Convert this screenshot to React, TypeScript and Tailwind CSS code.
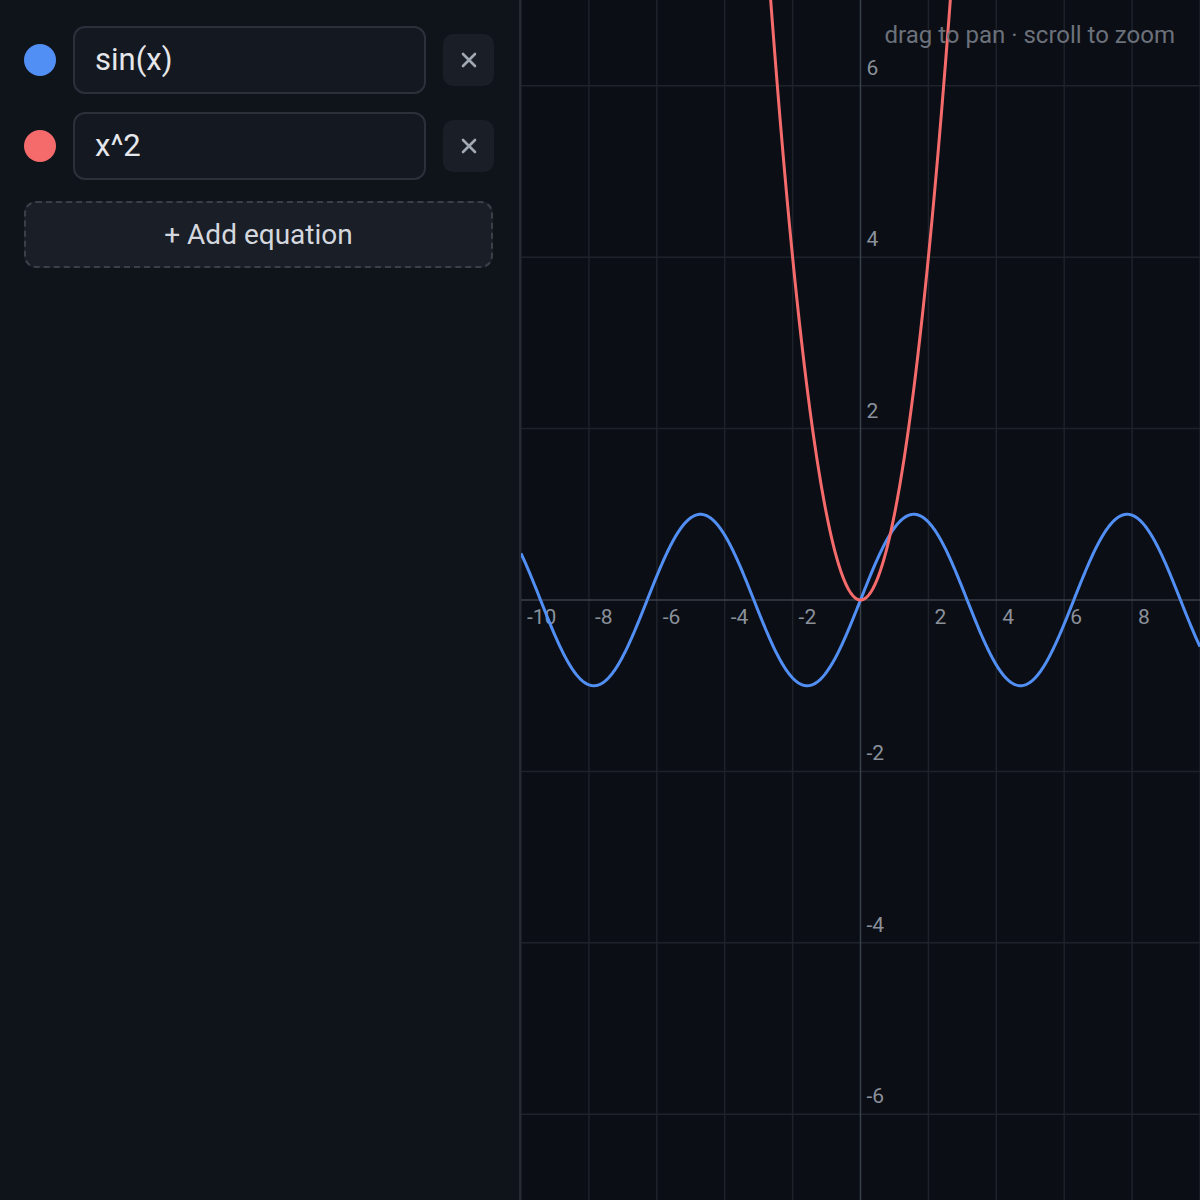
interface Equation {
    expr: string,
    color: string,
    fn: (x: number) => number
}

const equations: Equation[] = [
    { expr: "sin(x)", color: "#528ff5", fn: (x) => Math.sin(x) },
    { expr: "x^2", color: "#f56b6b", fn: (x) => x * x },
];

// viewport: x in [-10, 10], y in [-7, 7]
const W = 679;
const H = 1200;
const X_MIN = -10;
const X_MAX = 10;
const Y_MIN = -7;
const Y_MAX = 7;

const sx = (x: number) => ((x - X_MIN) / (X_MAX - X_MIN)) * W;
const sy = (y: number) => H - ((y - Y_MIN) / (Y_MAX - Y_MIN)) * H;

function curvePath(fn: (x: number) => number) {
    const pts: string[] = [];
    const steps = 800;
    for (let i = 0; i <= steps; i++) {
        const x = X_MIN + ((X_MAX - X_MIN) * i) / steps;
        const y = fn(x);
        const py = Math.max(-200, Math.min(H + 200, sy(y)));
        pts.push(`${i === 0 ? "M" : "L"}${sx(x).toFixed(2)},${py.toFixed(2)}`);
    }
    return pts.join(" ");
}

const xTicks = [-10, -8, -6, -4, -2, 2, 4, 6, 8];
const yTicks = [6, 4, 2, -2, -4, -6];

function Graph() {
    const ox = sx(0);
    const oy = sy(0);
    return (
        <svg width={W} height={H} className="block" style={{ fontFamily: "Roboto, sans-serif" }}>
            {xTicks.concat([10]).map((t) => (
                <line key={"gx" + t} x1={sx(t)} x2={sx(t)} y1={0} y2={H} stroke="#1e232b" strokeWidth={1.5} />
            ))}
            {yTicks.map((t) => (
                <line key={"gy" + t} x1={0} x2={W} y1={sy(t)} y2={sy(t)} stroke="#1e232b" strokeWidth={1.5} />
            ))}
            <line x1={ox} x2={ox} y1={0} y2={H} stroke="#3a404a" strokeWidth={1.5} />
            <line x1={0} x2={W} y1={oy} y2={oy} stroke="#3a404a" strokeWidth={1.5} />
            {xTicks.map((t) => (
                <text key={"lx" + t} x={sx(t) + 6} y={oy + 24} fontSize={21} fill="#8a919b">{t}</text>
            ))}
            {yTicks.map((t) => (
                <text key={"ly" + t} x={ox + 6} y={sy(t) - 11} fontSize={21} fill="#8a919b">{t}</text>
            ))}
            {equations.map((eq) => (
                <path key={eq.expr} d={curvePath(eq.fn)} fill="none" stroke={eq.color} strokeWidth={3} strokeLinejoin="round" />
            ))}
        </svg>
    );
}

function CloseIcon() {
    return (
        <svg width="16" height="16" viewBox="0 0 16 16" fill="none" stroke="currentColor" strokeWidth={2.6} strokeLinecap="round">
            <path d="M2 2 L14 14 M14 2 L2 14" />
        </svg>
    );
}

export default function App() {
    return (
        <div className="flex w-[1200px] h-[1200px] overflow-hidden bg-[#0b0e14] font-['Roboto',sans-serif]">
            <aside className="flex flex-col w-[521px] shrink-0 bg-[#0f131a] border-r-2 border-[#262b33] pl-6 pr-[25px] pt-[26px] gap-[18px]">
                {equations.map((eq) => (
                    <div key={eq.expr} className="flex flex-row items-center h-[68px]">
                        <span className="w-8 h-8 rounded-full shrink-0" style={{ backgroundColor: eq.color }} />
                        <div className="ml-[17px] w-[353px] h-[68px] flex items-center px-5 rounded-xl border-2 border-[#2b313b] bg-[#141820] text-[31px] text-[#e5e7eb]">
                            {eq.expr}
                        </div>
                        <button className="ml-[17px] w-[51px] h-[52px] flex items-center justify-center rounded-[10px] bg-[#1a1e26] text-[#a3a9b3]">
                            <CloseIcon />
                        </button>
                    </div>
                ))}
                <button className="mt-[3px] w-[469px] h-[67px] flex items-center justify-center rounded-xl border-2 border-dashed border-[#3a404a] bg-[#1a1e27] text-[28px] text-[#d4d8de]">
                    + Add equation
                </button>
            </aside>
            <main className="relative flex-1">
                <Graph />
                <span className="absolute top-[17px] right-[25px] text-[24px] text-[#6b717b]">
                    drag to pan · scroll to zoom
                </span>
            </main>
        </div>
    );
}
